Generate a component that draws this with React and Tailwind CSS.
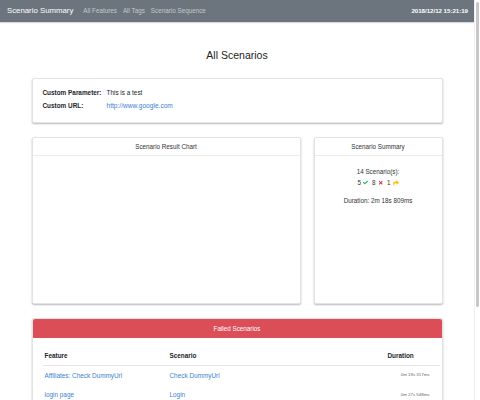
import { FaCheck, FaTimes, FaShare } from 'react-icons/fa'

const failed = [
  { feature: 'Affiliates: Check DummyUrl', scenario: 'Check DummyUrl', duration: '0m 19s 317ms' },
  { feature: 'login page', scenario: 'Login', duration: '0m 27s 548ms' },
]

function Card({ title, className = '', children }) {
  return (
    <div className={`flex flex-col rounded-[2px] border border-[#e3e3e3] bg-white shadow-[0_1px_2px_rgba(0,0,0,0.28)] ${className}`}>
      <div className="flex h-[18px] shrink-0 items-center justify-center border-b border-[#ececec] text-[6.3px] text-[#333]">{title}</div>
      {children}
    </div>
  )
}

export default function App() {
  return (
    <div className="flex h-[400px] w-[480px] overflow-hidden bg-white text-[#212529]" style={{ fontFamily: '"Liberation Sans", Arial, sans-serif' }}>
      <div className="w-[474px] shrink-0">
        <nav className="flex h-[22px] items-center bg-[#6c757d] pl-[7px] pr-[6px] shadow-[0_1px_1px_rgba(0,0,0,0.15)]">
          <span className="text-[7.8px] font-medium text-white">Scenario Summary</span>
          <div className="ml-[10px] flex gap-[6px] text-[6.3px] text-[#c3c7ca]">
            <span>All Features</span>
            <span>All Tags</span>
            <span>Scenario Sequence</span>
          </div>
          <span className="ml-auto text-[6.1px] font-bold text-white">2018/12/12 15:21:19</span>
        </nav>

        <h1 className="mb-[16px] mt-[26px] text-center text-[10.5px] leading-[14px] text-[#222]">All Scenarios</h1>

        <div className="mx-auto w-[411px]">
          <div className="h-[45px] rounded-[2px] border border-[#e3e3e3] bg-white pl-[10px] pt-[7px] text-[6.4px] shadow-[0_1px_2px_rgba(0,0,0,0.28)]">
            <div className="flex h-[13px] items-center">
              <span className="w-[64px] font-bold">Custom Parameter:</span>
              <span>This is a test</span>
            </div>
            <div className="flex h-[13px] items-center">
              <span className="w-[64px] font-bold">Custom URL:</span>
              <span className="text-[6.6px] text-[#3d7fd0]">http://www.google.com</span>
            </div>
          </div>

          <div className="mt-[14px] flex h-[167px] gap-[13px]">
            <Card title="Scenario Result Chart" className="w-[269px]" />
            <Card title="Scenario Summary" className="w-[129px]">
              <div className="flex flex-col items-center pt-[11px] text-[6.3px] text-[#333]">
                <div className="leading-[10px]">14 Scenario(s):</div>
                <div className="flex items-center gap-[2px] leading-[11px]">
                  <span>5</span>
                  <FaCheck className="h-[5px] w-[5px] text-[#28a745]" />
                  <span className="ml-[2px]">8</span>
                  <FaTimes className="h-[5.5px] w-[5.5px] text-[#dc3545]" />
                  <span className="ml-[2px]">1</span>
                  <FaShare className="h-[6px] w-[6px] text-[#ffc107]" />
                </div>
                <div className="mt-[8px] leading-[10px]">Duration: 2m 18s 809ms</div>
              </div>
            </Card>
          </div>

          <div className="mt-[14px] rounded-[2px] border border-[#e3e3e3] bg-white shadow-[0_1px_2px_rgba(0,0,0,0.28)]">
            <div className="flex h-[19px] items-center justify-center rounded-t-[2px] bg-[#db4e57] text-[6.3px] font-medium text-white">Failed Scenarios</div>
            <div className="pl-[10px] pr-[2px] pt-[8px] text-[6.4px]">
              <div className="grid h-[20px] grid-cols-[125px_217px_1fr] items-center border-b border-[#e6e6e6] font-bold">
                <span className="pl-[2px]">Feature</span>
                <span className="pl-[2px]">Scenario</span>
                <span className="pl-[3px]">Duration</span>
              </div>
              {failed.map((row) => (
                <div key={row.feature} className="grid h-[19.5px] grid-cols-[125px_217px_1fr] items-center">
                  <span className="pl-[2px] text-[#3d7fd0]">{row.feature}</span>
                  <span className="pl-[2px] text-[#3d7fd0]">{row.scenario}</span>
                  <span className="pr-[10px] text-right text-[4.4px] text-[#666]">{row.duration}</span>
                </div>
              ))}
            </div>
          </div>
        </div>
      </div>

      <div className="flex w-[6px] flex-col border-l border-[#efefef]">
        <div className="ml-[1px] mt-[2px] h-[305px] w-[3px] rounded-full bg-[#c8c8c8]" />
      </div>
    </div>
  )
}
